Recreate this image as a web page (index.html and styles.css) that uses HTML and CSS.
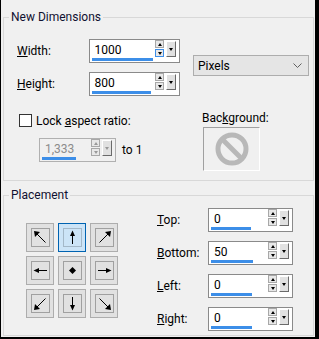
FILE: index.html
```html
<!DOCTYPE html>
<html lang="en">
<head>
  <meta charset="UTF-8" />
  <title>Resize Canvas</title>
  <link rel="stylesheet" href="styles.css">
</head>
<body>
  <div class="window">

    <fieldset class="group group-dims">
      <legend>New Dimensions</legend>
      <div class="dims">
        <div class="dims-left">
          <div class="field-row row-width">
            <span class="field-label"><u>W</u>idth:</span>
            <div class="spin spin-wide">
              <div class="spin-field"><span class="spin-value">1000</span><span class="spin-bar" style="width:61px"></span></div>
              <div class="spin-arrows"><span class="spin-up"></span><span class="spin-down focus"></span></div>
              <span class="spin-drop"></span>
            </div>
          </div>
          <div class="field-row row-height">
            <span class="field-label"><u>H</u>eight:</span>
            <div class="spin spin-wide">
              <div class="spin-field"><span class="spin-value">800</span><span class="spin-bar" style="width:59px"></span></div>
              <div class="spin-arrows"><span class="spin-up"></span><span class="spin-down"></span></div>
              <span class="spin-drop"></span>
            </div>
          </div>
          <div class="lock-row">
            <span class="checkbox"></span>
            <span>Lock <u>a</u>spect ratio:</span>
          </div>
          <div class="ratio-row">
            <div class="spin spin-ratio disabled">
              <div class="spin-field"><span class="spin-value">1,333</span><span class="spin-bar" style="width:34px"></span></div>
              <div class="spin-arrows"><span class="spin-up"></span><span class="spin-down"></span></div>
              <span class="spin-drop"></span>
            </div>
            <span class="ratio-to">to 1</span>
          </div>
        </div>

        <div class="dims-right">
          <div class="select">
            <span>Pixels</span>
            <svg width="9" height="5" viewBox="0 0 9 5"><path d="M0.5 0.5 L4.5 4.5 L8.5 0.5" fill="none" stroke="#606060" stroke-width="1"/></svg>
          </div>
          <div class="bg-label">Bac<u>k</u>ground:</div>
          <div class="bg-box">
            <svg width="34" height="34" viewBox="0 0 34 34">
              <circle cx="17" cy="17" r="14" fill="none" stroke="#b8b8b8" stroke-width="5"/>
              <path d="M7 7 L27 27" stroke="#b8b8b8" stroke-width="5"/>
            </svg>
          </div>
        </div>
      </div>
    </fieldset>

    <fieldset class="group group-place">
      <legend>Placement</legend>
      <div class="place">
        <div class="place-grid">
          <button class="place-btn"><span class="place-ico">
            <svg width="17" height="17" viewBox="0 0 17 17"><path d="M13.5 13.5 L4 4" stroke="#000"/><polygon points="2,2 8,3 3,8"/></svg>
          </span></button>
          <button class="place-btn selected"><span class="place-ico">
            <svg width="17" height="17" viewBox="0 0 17 17"><path d="M8.5 15 L8.5 5" stroke="#000"/><polygon points="8.5,1.5 6,7 11,7"/></svg>
          </span></button>
          <button class="place-btn"><span class="place-ico">
            <svg width="17" height="17" viewBox="0 0 17 17"><path d="M3.5 13.5 L13 4" stroke="#000"/><polygon points="15,2 9,3 14,8"/></svg>
          </span></button>
          <button class="place-btn"><span class="place-ico">
            <svg width="17" height="17" viewBox="0 0 17 17"><path d="M15 8.5 L5 8.5" stroke="#000"/><polygon points="1.5,8.5 7,6 7,11"/></svg>
          </span></button>
          <button class="place-btn"><span class="place-ico">
            <svg width="17" height="17" viewBox="0 0 17 17"><polygon points="8.5,5 12,8.5 8.5,12 5,8.5"/></svg>
          </span></button>
          <button class="place-btn"><span class="place-ico">
            <svg width="17" height="17" viewBox="0 0 17 17"><path d="M2 8.5 L12 8.5" stroke="#000"/><polygon points="15.5,8.5 10,6 10,11"/></svg>
          </span></button>
          <button class="place-btn"><span class="place-ico">
            <svg width="17" height="17" viewBox="0 0 17 17"><path d="M13.5 3.5 L4 13" stroke="#000"/><polygon points="2,15 3,9 8,14"/></svg>
          </span></button>
          <button class="place-btn"><span class="place-ico">
            <svg width="17" height="17" viewBox="0 0 17 17"><path d="M8.5 2 L8.5 12" stroke="#000"/><polygon points="8.5,15.5 6,10 11,10"/></svg>
          </span></button>
          <button class="place-btn"><span class="place-ico">
            <svg width="17" height="17" viewBox="0 0 17 17"><path d="M3.5 3.5 L13 13" stroke="#000"/><polygon points="15,15 9,14 14,9"/></svg>
          </span></button>
        </div>

        <div class="margins">
          <div class="field-row">
            <span class="margin-label"><u>T</u>op:</span>
            <div class="spin spin-margin">
              <div class="spin-field"><span class="spin-value">0</span><span class="spin-bar" style="width:40px"></span></div>
              <div class="spin-arrows"><span class="spin-up"></span><span class="spin-down"></span></div>
              <span class="spin-drop"></span>
            </div>
          </div>
          <div class="field-row">
            <span class="margin-label"><u>B</u>ottom:</span>
            <div class="spin spin-margin">
              <div class="spin-field"><span class="spin-value">50</span><span class="spin-bar" style="width:42px"></span></div>
              <div class="spin-arrows"><span class="spin-up"></span><span class="spin-down"></span></div>
              <span class="spin-drop"></span>
            </div>
          </div>
          <div class="field-row">
            <span class="margin-label"><u>L</u>eft:</span>
            <div class="spin spin-margin">
              <div class="spin-field"><span class="spin-value">0</span><span class="spin-bar" style="width:41px"></span></div>
              <div class="spin-arrows"><span class="spin-up"></span><span class="spin-down"></span></div>
              <span class="spin-drop"></span>
            </div>
          </div>
          <div class="field-row">
            <span class="margin-label"><u>R</u>ight:</span>
            <div class="spin spin-margin">
              <div class="spin-field"><span class="spin-value">0</span><span class="spin-bar" style="width:41px"></span></div>
              <div class="spin-arrows"><span class="spin-up"></span><span class="spin-down"></span></div>
              <span class="spin-drop"></span>
            </div>
          </div>
        </div>
      </div>
    </fieldset>

  </div>
</body>
</html>
```

FILE: styles.css
```css
html, body {
  margin: 0;
  padding: 0;
  background-color: #f0f0f0;
  font-family: "Segoe UI", Roboto, "Noto Sans", sans-serif;
  font-size: 12px;
  color: #000;
}

.window {
  width: 319px;
  height: 339px;
  box-sizing: border-box;
  border-left: 1px solid #000;
  border-right: 4px solid #000;
  border-bottom: 2px solid #000;
  padding: 9px 1px 0 2px;
  background-color: #f0f0f0;
}

.group {
  margin: 0;
  padding: 0;
  min-width: 0;
  border: 1px solid #d8d8d8;
  box-sizing: border-box;
}

.group legend {
  margin-left: 5px;
  padding: 0 2px;
  line-height: 16px;
  color: #101030;
}

.group-dims {
  height: 172px;
}

.group-place {
  margin-top: 6px;
  height: 149px;
}

/* New Dimensions */

.dims {
  display: flex;
  gap: 13px;
}

.dims-left {
  width: 163px;
  padding-left: 13px;
}

.field-row {
  display: flex;
  align-items: center;
}

.row-width {
  margin-top: 14px;
}

.row-height {
  margin-top: 9px;
}

.field-label {
  width: 72px;
}

.lock-row {
  display: flex;
  align-items: center;
  gap: 4px;
  margin-top: 17px;
  margin-left: 2px;
  height: 15px;
}

.checkbox {
  width: 13px;
  height: 13px;
  box-sizing: border-box;
  border: 1px solid #333;
  background-color: #fff;
}

.ratio-row {
  display: flex;
  align-items: center;
  gap: 6px;
  margin-top: 10px;
  margin-left: 22px;
}

.dims-right {
  display: flex;
  flex-direction: column;
  align-items: flex-start;
}

.select {
  width: 116px;
  height: 21px;
  margin-top: 30px;
  box-sizing: border-box;
  border: 1px solid #adadad;
  background-color: #e5e5e5;
  display: flex;
  align-items: center;
  justify-content: space-between;
  padding: 0 6px 0 4px;
}

.bg-label {
  margin-top: 34px;
  margin-left: 9px;
  line-height: 16px;
}

.bg-box {
  width: 57px;
  height: 44px;
  margin-top: 1px;
  margin-left: 10px;
  box-sizing: border-box;
  border: 1px solid;
  border-color: #a0a0a0 #fff #fff #a0a0a0;
  display: flex;
  align-items: center;
  justify-content: center;
}

/* spin box */

.spin {
  display: flex;
  height: 24px;
  box-sizing: border-box;
  border: 1px solid #8a8a8a;
  background-color: #fff;
}

.spin-wide {
  width: 92px;
}

.spin-ratio {
  width: 77px;
}

.spin-margin {
  width: 85px;
}

.spin-field {
  flex: 1;
  display: flex;
  flex-direction: column;
  padding: 3px 0 0 2px;
}

.spin-value {
  line-height: 14px;
  padding-left: 3px;
}

.spin-bar {
  height: 3px;
  margin-top: 1px;
  background-color: #3c8ee8;
}

.spin-arrows {
  display: flex;
  flex-direction: column;
  gap: 1px;
  width: 9px;
}

.spin-up,
.spin-down {
  height: 8px;
  box-sizing: border-box;
  border: 1px solid #a8a8a8;
  background-color: #e8e8e8;
  display: flex;
  align-items: center;
  justify-content: center;
}

.spin-down.focus {
  border-color: #3c8ee8;
}

.spin-up::after {
  content: "";
  border-left: 2.5px solid transparent;
  border-right: 2.5px solid transparent;
  border-bottom: 3px solid #000;
}

.spin-down::after {
  content: "";
  border-left: 2.5px solid transparent;
  border-right: 2.5px solid transparent;
  border-top: 3px solid #000;
}

.spin-drop {
  width: 10px;
  height: 16px;
  margin: 1px 3px 0 2px;
  box-sizing: border-box;
  border: 1px solid;
  border-color: #fff #6a6a6a #6a6a6a #fff;
  background-color: #e1e1e1;
  display: flex;
  align-items: center;
  justify-content: center;
}

.spin-drop::after {
  content: "";
  border-left: 2.5px solid transparent;
  border-right: 2.5px solid transparent;
  border-top: 3px solid #000;
}

.spin.disabled {
  background-color: #f0f0f0;
  border-color: #b0b0b0;
  color: #8c8c8c;
}

.spin.disabled .spin-up::after,
.spin.disabled .spin-down::after,
.spin.disabled .spin-drop::after {
  border-top-color: #999;
  border-bottom-color: #999;
}

.ratio-to {
  line-height: 16px;
}

/* Placement */

.place {
  display: flex;
}

.place-grid {
  display: grid;
  grid-template-columns: repeat(3, 28px);
  grid-auto-rows: 29px;
  gap: 4px;
  margin: 20px 0 0 22px;
}

.place-btn {
  width: 28px;
  height: 29px;
  padding: 0;
  box-sizing: border-box;
  border: 1px solid #adadad;
  background-color: #e1e1e1;
  display: flex;
  align-items: center;
  justify-content: center;
}

.place-btn.selected {
  border-color: #0063b1;
  background-color: #cce4f7;
}

.place-ico {
  width: 19px;
  height: 19px;
  box-sizing: border-box;
  border: 1px solid #a0a0a0;
  display: flex;
  align-items: center;
  justify-content: center;
}

.place-btn.selected .place-ico {
  border-color: #a4b8c8;
}

.margins {
  display: flex;
  flex-direction: column;
  gap: 9px;
  margin: 5px 0 0 39px;
}

.margin-label {
  width: 51px;
}
```
